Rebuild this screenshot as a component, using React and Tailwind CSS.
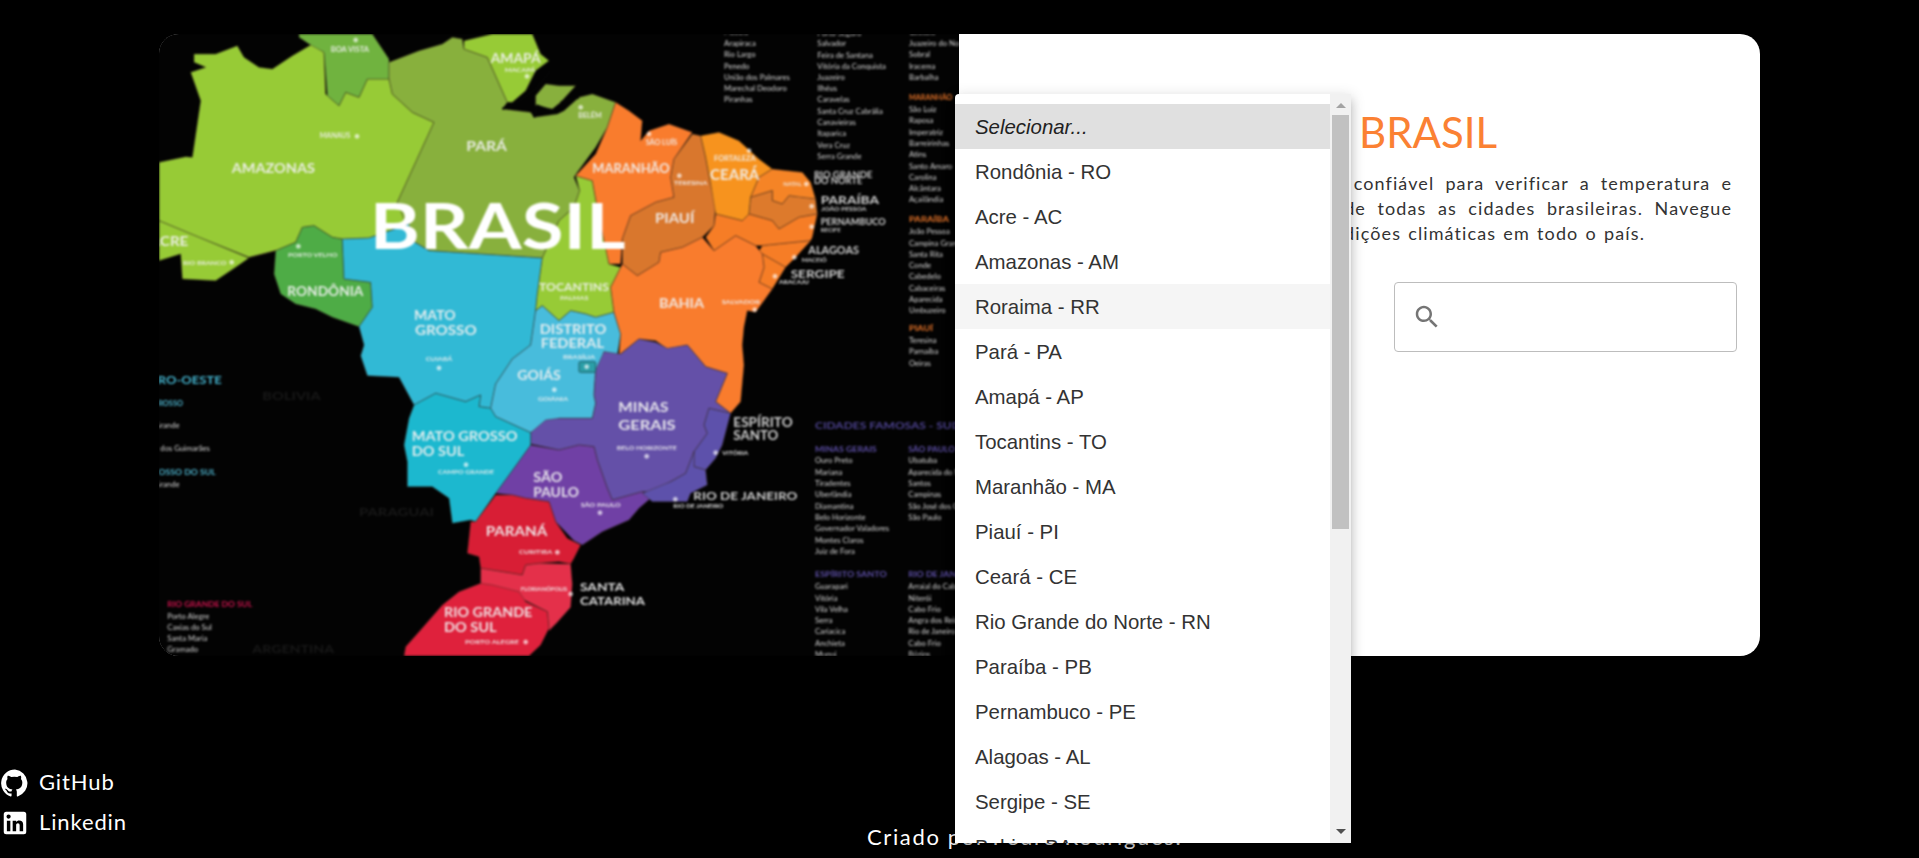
import { Fragment } from 'react'

// estados do mapa, coordenadas num viewBox 2400x1866
const states = [
  ['#97cb36', '105,60 170,60 235,35 255,70 300,100 340,105 400,65 460,30 495,55 500,180 540,215 560,175 600,190 625,135 690,135 700,180 760,235 825,265 715,505 750,570 630,612 550,615 520,610 465,575 430,580 410,625 350,650 270,670 120,610 0,560 0,385 80,368 100,370 125,200 95,115 140,100 105,85'],
  ['#97cb36', '0,560 120,610 270,672 230,700 170,740 70,735 65,660 0,680'],
  ['#70b33f', '420,0 640,0 690,75 690,135 625,135 600,190 560,175 540,215 505,185 495,55 450,30 420,10'],
  ['#88b03d', '690,85 780,50 850,30 880,10 910,15 915,45 985,70 1045,205 1030,225 1115,235 1125,250 1195,240 1215,230 1260,190 1300,180 1370,205 1345,280 1310,340 1255,415 1245,430 1262,470 1245,520 1200,560 1150,672 810,650 760,620 715,505 825,265 760,235 700,180 690,135'],
  ['#88b03d', '1130,185 1160,150 1200,155 1250,155 1205,205 1180,225 1130,215'],
  ['#97cb36', '915,20 1000,0 1120,0 1145,60 1170,80 1130,110 1100,170 1060,205 1045,205 985,70 915,45'],
  ['#4eac46', '465,575 520,610 550,615 555,735 635,745 640,820 600,878 520,850 470,825 410,810 365,780 345,720 350,650 270,672 350,650 410,625 430,580'],
  ['#31b9d5', '550,615 630,612 750,570 760,620 810,650 1150,672 1135,780 1130,830 1115,933 1060,975 1010,1050 995,1123 960,1118 965,1083 920,1103 830,1078 765,1113 720,1030 625,1025 605,965 615,933 600,878 640,820 635,745 555,735'],
  ['#97cb36', '1250,425 1300,440 1320,550 1340,640 1350,690 1385,700 1355,760 1365,835 1310,850 1280,840 1235,830 1200,860 1150,815 1130,830 1135,780 1150,672 1200,560 1245,520 1262,470'],
  ['#48bcdc', '1150,815 1200,860 1235,830 1280,840 1310,850 1365,835 1385,900 1380,933 1375,963 1335,953 1330,983 1310,1008 1305,1083 1310,1108 1300,1153 1200,1153 1115,1196 1010,1148 995,1123 1010,1050 1060,975 1115,933 1130,830'],
  ['#f97c2d', '1370,205 1410,230 1450,260 1445,320 1470,290 1530,270 1600,295 1545,375 1535,430 1545,490 1490,505 1415,545 1390,615 1385,690 1350,690 1320,550 1300,440 1250,425 1310,360 1345,280'],
  ['#d9772d', '1600,300 1625,305 1640,370 1655,450 1670,515 1665,575 1630,610 1570,640 1505,655 1500,685 1435,725 1390,690 1390,615 1415,545 1490,505 1545,490 1535,430 1545,375'],
  ['#f7931e', '1625,305 1680,295 1740,320 1800,375 1840,405 1800,430 1775,490 1770,540 1750,560 1670,540 1655,450 1640,370'],
  ['#f58426', '1840,405 1930,415 1955,445 1970,495 1920,490 1890,485 1870,510 1840,500 1840,470 1775,490 1800,430'],
  ['#dd7a2c', '1775,490 1840,470 1840,500 1870,510 1890,485 1970,495 1975,540 1920,550 1860,585 1840,560 1770,540'],
  ['#f67d26', '1670,540 1750,560 1770,540 1840,560 1860,585 1920,550 1975,540 1960,610 1955,620 1810,635 1790,635 1730,605 1665,650 1640,610 1665,575'],
  ['#f67d26', '1810,635 1955,620 1910,670 1880,700 1810,660 1800,650'],
  ['#f67d26', '1810,660 1880,700 1840,765 1800,745 1815,700'],
  ['#f97c2d', '1390,690 1435,725 1500,685 1505,655 1570,640 1630,610 1665,650 1730,605 1790,635 1810,660 1815,700 1800,745 1840,765 1790,835 1765,830 1755,880 1750,933 1755,993 1745,1103 1715,1138 1670,1103 1705,1018 1640,998 1585,933 1525,945 1490,920 1440,915 1415,935 1380,963 1385,900 1365,835 1355,760 1385,700'],
  ['#6450a8', '1385,960 1415,935 1440,915 1490,925 1525,943 1585,933 1640,998 1705,1018 1670,1103 1715,1138 1650,1123 1635,1173 1645,1198 1605,1253 1580,1318 1535,1343 1480,1373 1450,1373 1360,1398 1345,1363 1315,1278 1305,1238 1260,1233 1200,1248 1115,1230 1115,1196 1160,1158 1200,1153 1300,1153 1310,1108 1305,1083 1310,1008 1335,953'],
  ['#7040a5', '1115,1233 1200,1248 1260,1233 1305,1238 1315,1278 1345,1363 1360,1398 1450,1373 1475,1393 1440,1423 1410,1458 1330,1493 1270,1533 1245,1520 1200,1473 1190,1463 1170,1403 1100,1393 1060,1383 1010,1378 1050,1323'],
  ['#5d51ab', '1715,1138 1690,1233 1670,1273 1640,1308 1605,1298 1605,1253 1645,1198 1635,1173 1650,1123'],
  ['#5d51ab', '1605,1253 1605,1298 1640,1308 1645,1353 1595,1378 1585,1403 1530,1403 1480,1403 1450,1378 1535,1343 1580,1318'],
  ['#1cb8cf', '765,1113 830,1078 920,1103 965,1083 960,1118 995,1123 1010,1148 1115,1196 1115,1233 1050,1323 1010,1378 950,1463 935,1458 880,1468 870,1393 820,1358 745,1358 745,1283 735,1233 750,1153'],
  ['#d81e35', '1010,1383 1060,1383 1100,1393 1170,1403 1190,1463 1225,1513 1265,1533 1245,1573 1235,1590 1200,1583 1140,1588 1100,1593 1090,1623 1030,1613 965,1603 960,1568 925,1558 935,1463 950,1463'],
  ['#e4304a', '965,1603 1030,1613 1090,1623 1100,1593 1140,1588 1235,1590 1240,1650 1235,1720 1195,1765 1170,1790 1165,1733 1100,1700 1000,1655 965,1650'],
  ['#df213c', '965,1648 1000,1653 1080,1673 1100,1703 1165,1733 1170,1783 1145,1833 1110,1866 735,1866 740,1838 780,1793 850,1713 900,1673'],
]

// rótulos: texto, x, y, largura, corpo
const labels = [
  ['AMAZONAS', 218, 418, 250, 40], ['PARÁ', 922, 350, 122, 40], ['AMAPÁ', 995, 87, 150, 38],
  ['MANAUS', 482, 313, 92, 20], ['BOA VISTA', 515, 53, 115, 20], ['MACAPÁ', 1037, 113, 92, 18],
  ['ACRE', -28, 637, 116, 40], ['RIO BRANCO', 72, 693, 130, 18], ['PORTO VELHO', 387, 668, 148, 18],
  ['RONDÔNIA', 385, 785, 228, 40], ['MATO', 765, 857, 125, 40], ['GROSSO', 768, 902, 185, 40],
  ['CUIABÁ', 800, 981, 80, 18], ['BELÉM', 1258, 252, 70, 20], ['MARANHÃO', 1300, 418, 232, 38],
  ['SÃO LUÍS', 1460, 332, 95, 20], ['TERESINA', 1545, 452, 100, 18], ['FORTALEZA', 1665, 380, 125, 20],
  ['CEARÁ', 1653, 437, 148, 44], ['PIAUÍ', 1488, 567, 118, 38], ['NATAL', 1873, 456, 55, 18],
  ['BAHIA', 1500, 822, 135, 42], ['SALVADOR', 1688, 809, 115, 18], ['TOCANTINS', 1140, 772, 210, 36],
  ['PALMAS', 1203, 798, 85, 18], ['DISTRITO', 1142, 900, 200, 38], ['FEDERAL', 1145, 943, 190, 38],
  ['BRASÍLIA', 1212, 976, 96, 16], ['GOIÁS', 1075, 1038, 130, 38], ['GOIÂNIA', 1137, 1102, 90, 16],
  ['MINAS', 1378, 1134, 150, 40], ['GERAIS', 1378, 1188, 172, 40], ['BELO HORIZONTE', 1373, 1248, 180, 18],
  ['MATO GROSSO', 758, 1222, 318, 38], ['DO SUL', 758, 1265, 158, 38], ['CAMPO GRANDE', 837, 1321, 168, 18],
  ['SÃO', 1123, 1343, 87, 38], ['PAULO', 1123, 1389, 137, 38], ['SÃO PAULO', 1265, 1418, 120, 18],
  ['ESPÍRITO', 1723, 1179, 178, 38], ['SANTO', 1723, 1219, 135, 38], ['VITÓRIA', 1690, 1262, 78, 16],
  ['RIO DE JANEIRO', 1603, 1398, 312, 36], ['RIO DE JANEIRO', 1543, 1423, 150, 14],
  ['PARANÁ', 980, 1507, 185, 38], ['CURITIBA', 1080, 1560, 100, 18], ['FLORIANÓPOLIS', 1085, 1670, 140, 16],
  ['SANTA', 1263, 1672, 133, 34], ['CATARINA', 1263, 1712, 195, 34], ['RIO GRANDE', 855, 1750, 265, 40],
  ['DO SUL', 855, 1793, 158, 40], ['PORTO ALEGRE', 918, 1830, 162, 18], ['RIO GRANDE', 1965, 432, 175, 30],
  ['DO NORTE', 1965, 451, 145, 30], ['PARAÍBA', 1985, 510, 175, 36], ['JOÃO PESSOA', 1987, 532, 135, 18],
  ['PERNAMBUCO', 1985, 574, 195, 28], ['RECIFE', 1985, 594, 60, 16], ['ALAGOAS', 1948, 660, 152, 32],
  ['MACEIÓ', 1928, 683, 75, 18], ['SERGIPE', 1895, 731, 162, 36], ['ARACAJU', 1860, 751, 90, 16],
]

const dots = [
  [594, 307], [590, 18], [1104, 127], [218, 685], [418, 637], [840, 1002], [1265, 220], [1470, 300],
  [1561, 425], [1770, 350], [1942, 450], [1958, 517], [1958, 578], [1906, 670], [1848, 727], [1787, 827],
  [1283, 998], [1186, 1067], [1463, 1267], [921, 1292], [1323, 1436], [1670, 1256], [1549, 1396], [1195, 1555],
  [1235, 1680], [1100, 1824],
]

// listas de cidades ao lado do mapa
const cityLists = [
  [1695, ['Maceió', 3], ['Arapiraca', 36], ['Rio Largo', 70], ['Penedo', 104], ['União dos Palmares', 137], ['Marechal Deodoro', 171], ['Piranhas', 205]],
  [1975, ['Porto Seguro', 5], ['Salvador', 37], ['Feira de Santana', 71], ['Vitória da Conquista', 105], ['Juazeiro', 138], ['Ilhéus', 172], ['Caravelas', 205], ['Santa Cruz Cabrália', 239], ['Canavieiras', 273], ['Itaparica', 307], ['Vera Cruz', 341], ['Serra Grande', 375]],
  [2250, ['Caucaia', 3], ['Juazeiro do Norte', 36], ['Sobral', 70], ['Iracema', 104], ['Barbalha', 137], ['São Luiz', 235], ['Raposa', 268], ['Imperatriz', 302], ['Barreirinhas', 336], ['Atins', 370], ['Santo Amaro', 404], ['Carolina', 438], ['Alcântara', 471], ['Açailândia', 505], ['João Pessoa', 601], ['Campina Grande', 635], ['Santa Rita', 669], ['Conde', 702], ['Cabedelo', 736], ['Cabaceiras', 770], ['Aparecida', 804], ['Umbuzeiro', 838], ['Teresina', 928], ['Parnaíba', 961], ['Oeiras', 995]],
  [1968, ['Ouro Preto', 1288], ['Mariana', 1322], ['Tiradentes', 1356], ['Uberlândia', 1390], ['Diamantina', 1424], ['Belo Horizonte', 1458], ['Governador Valadores', 1492], ['Montes Claros', 1526], ['Juiz de Fora', 1560], ['Guarapari', 1666], ['Vitória', 1700], ['Vila Velha', 1733], ['Serra', 1767], ['Cariacica', 1801], ['Anchieta', 1835], ['Muqui', 1869]],
  [2248, ['Ubatuba', 1288], ['Aparecida do Norte', 1322], ['Santos', 1356], ['Campinas', 1390], ['São José dos Campos', 1424], ['São Paulo', 1458], ['Arraial do Cabo', 1666], ['Niterói', 1700], ['Cabo Frio', 1733], ['Angra dos Reis', 1767], ['Rio de Janeiro', 1801], ['Cabo Frio', 1835], ['Búzios', 1869]],
  [25, ['Porto Alegre', 1754], ['Caxias do Sul', 1787], ['Santa Maria', 1820], ['Gramado', 1855]],
  [-90, ['Campo Grande', 1182], ['Chapada dos Guimarães', 1252], ['Campo Grande', 1358]],
]

const headings = [
  ['MARANHÃO', 2250, 198, 130, '#e8752a'], ['PARAÍBA', 2250, 564, 120, '#e8752a'], ['PIAUÍ', 2250, 892, 72, '#e8752a'],
  ['MINAS GERAIS', 1968, 1253, 185, '#5e50a8'], ['SÃO PAULO', 2248, 1253, 140, '#5e50a8'],
  ['ESPÍRITO SANTO', 1968, 1630, 215, '#5e50a8'], ['RIO DE JANEIRO', 2248, 1630, 205, '#5e50a8'],
  ['RIO GRANDE DO SUL', 25, 1718, 255, '#d0144f'], ['MATO GROSSO', -90, 1117, 162, '#4fb6d0'], ['MATO GROSSO DO SUL', -120, 1323, 290, '#4fb6d0'],
]

const estados = [
  'Rondônia - RO', 'Acre - AC', 'Amazonas - AM', 'Roraima - RR', 'Pará - PA', 'Amapá - AP', 'Tocantins - TO',
  'Maranhão - MA', 'Piauí - PI', 'Ceará - CE', 'Rio Grande do Norte - RN', 'Paraíba - PB', 'Pernambuco - PE',
  'Alagoas - AL', 'Sergipe - SE', 'Bahia - BA', 'Minas Gerais - MG', 'Espírito Santo - ES', 'Rio de Janeiro - RJ',
  'São Paulo - SP', 'Paraná - PR', 'Santa Catarina - SC', 'Rio Grande do Sul - RS', 'Mato Grosso do Sul - MS',
  'Mato Grosso - MT', 'Goiás - GO', 'Distrito Federal - DF',
]

function BrazilMap() {
  return (
    <svg viewBox="0 0 2400 1866" className="block h-[622px] w-[800px] font-['Lato',sans-serif] blur-[1px]">
      <rect width="2400" height="1866" fill="#030303" />
      {states.map(([color, points], i) => (
        <polygon key={i} points={points} fill={color} stroke="#3a2a20" strokeOpacity="0.4" strokeWidth="3" strokeLinejoin="round" />
      ))}
      <path d="M1030 225 L1090 195 L1130 165 L1175 110 M1125 250 L1135 215 L1190 235 M1260 190 L1205 205" stroke="#050505" strokeWidth="7" fill="none" />
      <rect x="1260" y="983" width="50" height="32" rx="4" fill="#2b9fa8" stroke="#1f5f66" strokeWidth="3" />

      <text x="632" y="645" fontSize="188" fontWeight="700" fill="#fff" textLength="768" lengthAdjust="spacingAndGlyphs">BRASIL</text>

      {labels.map(([text, x, y, w, size], i) => (
        <text key={i} x={x} y={y} fontSize={size} fontWeight="700" fill="#f1f1f1" fillOpacity={x > 1860 || x === 1723 || x === 1603 ? 0.85 : 0.92} textLength={w} lengthAdjust="spacingAndGlyphs">
          {text}
        </text>
      ))}
      {dots.map(([cx, cy], i) => (
        <circle key={i} cx={cx} cy={cy} r="6" fill="#fff" fillOpacity="0.65" stroke="#fff" strokeOpacity="0.7" strokeWidth="2" />
      ))}

      <text x="1968" y="1186" fontSize="30" fontWeight="700" fill="#4d4390" textLength="520" lengthAdjust="spacingAndGlyphs">CIDADES FAMOSAS - SUDESTE</text>
      <text x="-105" y="1051" fontSize="32" fontWeight="700" fill="#45b5d0" textLength="293" lengthAdjust="spacingAndGlyphs">CENTRO-OESTE</text>
      <text x="310" y="1098" fontSize="34" fontWeight="700" fill="#181818" textLength="175" lengthAdjust="spacingAndGlyphs">BOLIVIA</text>
      <text x="600" y="1447" fontSize="34" fontWeight="700" fill="#181818" textLength="225" lengthAdjust="spacingAndGlyphs">PARAGUAI</text>
      <text x="280" y="1857" fontSize="34" fontWeight="700" fill="#181818" textLength="245" lengthAdjust="spacingAndGlyphs">ARGENTINA</text>

      {headings.map(([text, x, y, w, color], i) => (
        <text key={i} x={x} y={y} fontSize="24" fontWeight="700" fill={color} textLength={w} lengthAdjust="spacingAndGlyphs">{text}</text>
      ))}
      {cityLists.map(([x, ...rows], i) => (
        <Fragment key={i}>
          {rows.map(([text, y]) => (
            <text key={y} x={x} y={y} fontSize="23" fontWeight="400" fill="#d6d6d6">{text}</text>
          ))}
        </Fragment>
      ))}
    </svg>
  )
}

function SearchIcon() {
  return (
    <svg viewBox="0 0 24 24" className="h-[30px] w-[30px] shrink-0 fill-[#757575]">
      <path d="M15.5 14h-.79l-.28-.27C15.41 12.59 16 11.11 16 9.5 16 5.91 13.09 3 9.5 3S3 5.91 3 9.5 5.91 16 9.5 16c1.61 0 3.09-.59 4.23-1.57l.27.28v.79l5 4.99L20.49 19l-4.99-5zm-6 0C7.01 14 5 11.99 5 9.5S7.01 5 9.5 5 14 7.01 14 9.5 11.99 14 9.5 14z" />
    </svg>
  )
}

function GithubIcon() {
  return (
    <svg viewBox="0 0 24 24" className="h-[30px] w-[30px] shrink-0 fill-white">
      <path d="M12 1.27a11 11 0 00-3.48 21.46c.55.09.73-.28.73-.55v-1.84c-3.03.64-3.67-1.46-3.67-1.46-.55-1.29-1.28-1.65-1.28-1.65-.92-.65.1-.65.1-.65 1.1 0 1.73 1.1 1.73 1.1.92 1.65 2.57 1.2 3.21.92a2 2 0 01.64-1.47c-2.47-.27-5.04-1.19-5.04-5.5 0-1.1.46-2.1 1.1-2.76-.1-.26-.46-1.29.11-2.65 0 0 .83-.27 2.75 1.02a9.58 9.58 0 015 0c1.91-1.3 2.75-1.02 2.75-1.02.55 1.36.2 2.4.1 2.65.65.73 1.1 1.65 1.1 2.76 0 4.32-2.65 5.23-5.13 5.5.36.35.73 1.02.73 2.02v3.03c0 .27.1.64.73.55A11 11 0 0012 1.27" />
    </svg>
  )
}

function LinkedinIcon() {
  return (
    <svg viewBox="0 0 24 24" className="h-[30px] w-[30px] shrink-0 fill-white">
      <path d="M19 3a2 2 0 0 1 2 2v14a2 2 0 0 1-2 2H5a2 2 0 0 1-2-2V5a2 2 0 0 1 2-2h14m-.5 15.5v-5.3a3.26 3.26 0 0 0-3.26-3.26c-.85 0-1.84.52-2.32 1.3v-1.11h-2.79v8.37h2.79v-4.93c0-.77.62-1.4 1.39-1.4a1.4 1.4 0 0 1 1.4 1.4v4.93h2.79M6.88 8.56a1.68 1.68 0 0 0 1.68-1.68c0-.93-.75-1.69-1.68-1.69a1.69 1.69 0 0 0-1.69 1.69c0 .93.76 1.68 1.69 1.68m1.39 9.94v-8.37H5.5v8.37h2.77z" />
    </svg>
  )
}

function StateDropdown() {
  return (
    <div className="absolute left-[955px] top-[94px] flex h-[749px] w-[396px] overflow-hidden rounded-tl-[4px] bg-white font-['Liberation_Sans',Arial,sans-serif] text-[20.4px] text-[#333] shadow-[0_5px_5px_-3px_rgba(0,0,0,0.2),0_8px_10px_1px_rgba(0,0,0,0.14),0_3px_14px_2px_rgba(0,0,0,0.12)]">
      <ul className="w-[375px] shrink-0 py-[10px]">
        <li className="flex h-[45px] items-center bg-[#e0e0e0] px-5 pt-px italic text-[#222]">Selecionar...</li>
        {estados.map((nome) => (
          <li key={nome} className={`flex h-[45px] items-center px-5 pt-px ${nome === 'Roraima - RR' ? 'bg-[#f5f5f5]' : ''}`}>
            {nome}
          </li>
        ))}
      </ul>
      <div className="flex w-[21px] flex-col items-center bg-[#f1f1f1]">
        <svg viewBox="0 0 10 5" className="mt-[9px] h-[5px] w-[10px] shrink-0 fill-[#a3a3a3]"><path d="M5 0l5 5H0z" /></svg>
        <div className="mt-[7px] h-[414px] w-[17px] shrink-0 bg-[#c1c1c1]" />
        <svg viewBox="0 0 10 5" className="mt-auto mb-[9px] h-[5px] w-[10px] shrink-0 fill-[#505050]"><path d="M0 0h10L5 5z" /></svg>
      </div>
    </div>
  )
}

export default function App() {
  return (
    <div className="relative flex h-[858px] flex-col overflow-hidden bg-black font-['Lato',sans-serif]">
      <main className="mx-auto mt-[34px] grid h-[622px] w-[1601px] grid-cols-[800px_801px] overflow-hidden rounded-[20px] bg-white">
        <div className="overflow-hidden bg-black">
          <BrazilMap />
        </div>
        <section className="flex flex-col pt-[74px]">
          <h1 className="pr-[263px] text-right text-[42px] leading-[48px] font-normal text-[#fb8133] [word-spacing:30px]">CLIMA BRASIL</h1>
          <div className="mt-[15px] px-[28px] text-right text-[18px] leading-[25px] tracking-[1.1px] whitespace-nowrap text-[#333]">
            <p className="[word-spacing:5.4px]">Um site simples e confiável para verificar a temperatura e</p>
            <p className="[word-spacing:5.8px]">as previsões do tempo de todas as cidades brasileiras. Navegue</p>
            <p className="pr-[87px] [word-spacing:1.5px]">pelo mapa e acompanhe as condições climáticas em todo o país.</p>
          </div>
          <div className="mt-[36px] mr-[23px] flex h-[70px] w-[343px] items-center gap-2 self-end rounded-[4px] border border-[#bdbdbd] bg-white pl-[17px]">
            <SearchIcon />
            <input type="text" className="min-w-0 flex-1 bg-transparent outline-none" />
          </div>
        </section>
      </main>

      <footer className="mt-[112px] flex h-[90px] text-[22px] tracking-[0.04em] text-white">
        <div className="flex w-[867px] shrink-0 flex-col gap-[10px]">
          <a className="flex h-[30px] items-center gap-[9px]"><GithubIcon /><span className="pb-1">GitHub</span></a>
          <a className="flex h-[30px] items-center gap-[9px]"><LinkedinIcon /><span className="pb-1">Linkedin</span></a>
        </div>
        <p className="mt-[54px] h-[30px] leading-[30px] tracking-[0.075em]">Criado por Pedro Rodrigues.</p>
      </footer>

      <StateDropdown />
    </div>
  )
}
